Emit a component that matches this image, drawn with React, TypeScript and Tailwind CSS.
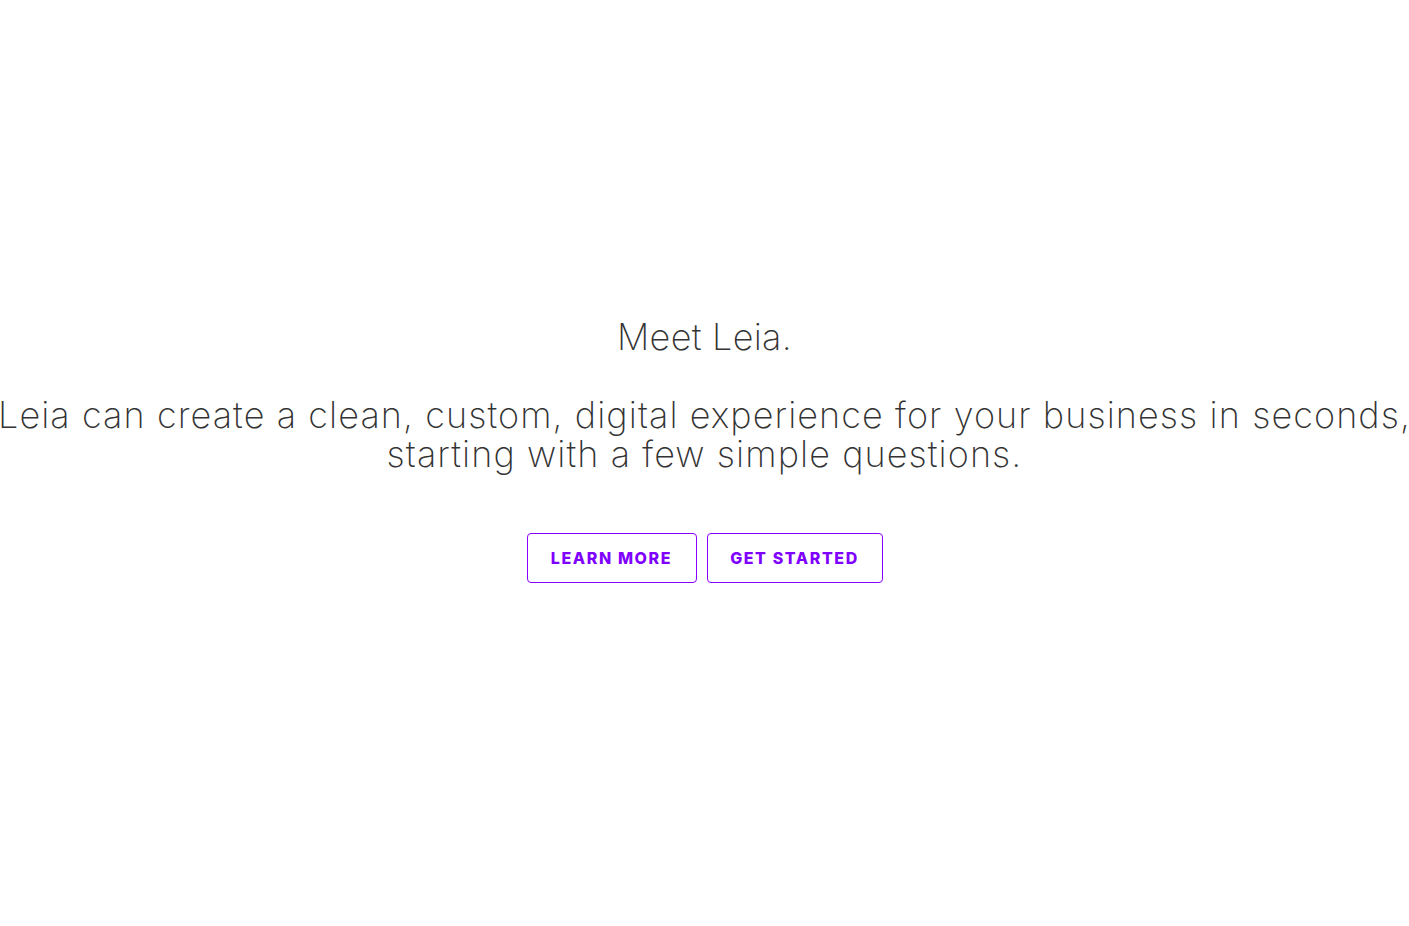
export default function App() {
  return (
    <div className="w-full h-[926px] bg-white flex flex-col items-center justify-center pb-[25px]" style={{ fontFamily: "Inter, 'Noto Sans', sans-serif" }}>
      <div className="flex flex-col items-center text-center text-[#333] font-extralight">
        <h1 className="text-[36px] leading-[39px] tracking-[0.3px] whitespace-nowrap">Meet Leia.</h1>
        <p className="mt-[39px] text-[36px] leading-[39px] tracking-[1.08px] whitespace-nowrap">
          Leia can create a clean, custom, digital experience for your business in seconds,
          <br />
          starting with a few simple questions.
        </p>
      </div>
      <div className="flex gap-[10px] mt-[59px]">
        <button className="w-[170px] h-[50px] border border-[#8a00ff] rounded-[4px] text-[#8000ff] font-extrabold text-[16px] tracking-[1.6px] uppercase">Learn More</button>
        <button className="w-[176px] h-[50px] border border-[#8a00ff] rounded-[4px] text-[#8000ff] font-extrabold text-[16px] tracking-[1.6px] uppercase">Get Started</button>
      </div>
    </div>
  );
}
